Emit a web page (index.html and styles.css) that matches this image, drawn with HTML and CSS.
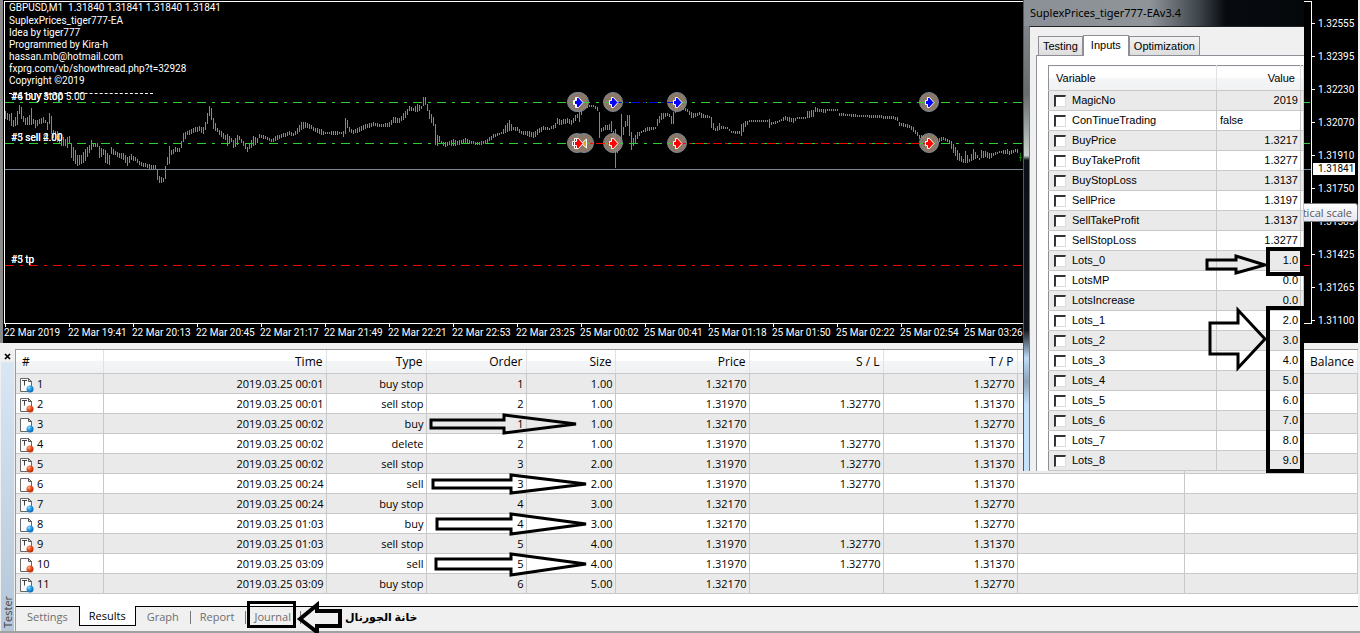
FILE: index.html
```html
<!DOCTYPE html>
<html lang="en">
<head>
    <meta charset="UTF-8">
    <meta name="viewport" content="width=device-width, initial-scale=1.0">
    <title>Strategy Tester - GBPUSD,M1</title>
    <link rel="stylesheet" href="styles.css">
</head>
<body>
    <svg class="defs" width="0" height="0" aria-hidden="true">
        <defs>
            <radialGradient id="ball-blue" cx="35%" cy="30%" r="75%">
                <stop offset="0" stop-color="#9adcff"/><stop offset=".5" stop-color="#1c97e8"/><stop offset="1" stop-color="#0b5fa8"/>
            </radialGradient>
            <radialGradient id="ball-red" cx="35%" cy="30%" r="75%">
                <stop offset="0" stop-color="#ffb08a"/><stop offset=".5" stop-color="#ea4a14"/><stop offset="1" stop-color="#a82a05"/>
            </radialGradient>
            <symbol id="doc" viewBox="0 0 15 16">
                <path d="M1.5 1.5h8l3 3v10h-11z" fill="#fdfdfd" stroke="#666"/>
                <path d="M9.5 1.5v3h3z" fill="#ddd" stroke="#555"/>
            </symbol>
            <symbol id="doc-t" viewBox="0 0 15 16">
                <use href="#doc"/>
                <path d="M3 3.5h5M5.500 3.500v5" fill="none" stroke="#444"/>
            </symbol>
            <symbol id="arrow" viewBox="0 0 10 11">
                <path d="M.5 3.500h2V.5h2l4.500 5l-4.500 5h-2v-3h-2z" fill="currentColor" stroke="#fff"/>
            </symbol>
        </defs>
    </svg>

    <div class="desktop">
        <!-- Chart -->
        <section class="chart">
            <div class="plot">
                <svg id="plot-svg" class="plot-svg" width="1306" height="322" viewBox="5 2 1306 322">
                    <g fill="#8b7867" stroke="#778899">
                        <circle cx="577" cy="102" r="9.500"/><circle cx="579" cy="102" r="9.500"/>
                        <circle cx="613" cy="102" r="9.500"/><circle cx="677" cy="102" r="9.500"/><circle cx="929" cy="102" r="9.500"/>
                        <circle cx="577" cy="143" r="9.500"/><circle cx="584" cy="143" r="9.500"/>
                        <circle cx="613" cy="143" r="9.500"/><circle cx="677" cy="143" r="9.500"/><circle cx="929" cy="143" r="9.500"/>
                    </g>
                    <g shape-rendering="crispEdges">
                        <path d="M5 169.500H1311" stroke="#778899"/>
                        <path d="M5 102.500H1311M5 143.500H1311" stroke="#32cd32" stroke-dasharray="9 6 3 6"/>
                        <path d="M5 265.500H1311" stroke="#f00" stroke-dasharray="9 6 3 6"/>
                        <path d="M613 102.500H677" stroke="#00f" stroke-dasharray="9 3 3 3"/>
                        <path d="M578 143.500H613M677 143.500H929" stroke="#f00" stroke-dasharray="9 3 3 3"/>
                        <path id="bars" stroke="#00e600" fill="none"/>
                        <path d="M1020.500 153v8M1019 157.500h3" stroke="#008000"/>
                    </g>
                    <g class="blue">
                        <use href="#arrow" x="573" y="97" width="10" height="11"/>
                        <use href="#arrow" x="574" y="97" width="10" height="11"/>
                        <use href="#arrow" x="609" y="97" width="10" height="11"/>
                        <use href="#arrow" x="673" y="97" width="10" height="11"/>
                        <use href="#arrow" x="925" y="97" width="10" height="11"/>
                    </g>
                    <g class="red">
                        <path d="M586.500 139v9l-5-4.500z" fill="#daa520" stroke="#fff"/>
                        <use href="#arrow" x="572" y="138" width="10" height="11"/>
                        <use href="#arrow" x="574" y="138" width="10" height="11"/>
                        <use href="#arrow" x="609" y="138" width="10" height="11"/>
                        <use href="#arrow" x="673" y="138" width="10" height="11"/>
                        <use href="#arrow" x="925" y="138" width="10" height="11"/>
                    </g>
                    <g class="order-text">
                        <text x="11" y="100">#6 buy stop 5.00</text>
                        <text x="11" y="100">#4 buy 3.00</text>
                        <text x="11" y="141">#3 sell 2.00</text>
                        <text x="11" y="141">#5 sell 4.00</text>
                        <text x="11" y="263">#3 tp</text>
                        <text x="11" y="263">#5 tp</text>
                    </g>
                </svg>
                <div class="comment">
                    <p class="symbol">GBPUSD,M1&nbsp; 1.31840 1.31841 1.31840 1.31841</p>
                    <p>SuplexPrices_tiger777-EA</p>
                    <p>Idea by tiger777</p>
                    <p>Programmed by Kira-h</p>
                    <p>hassan.mb@hotmail.com</p>
                    <p>fxprg.com/vb/showthread.php?t=32928</p>
                    <p>Copyright ©2019</p>
                    <p class="rule"></p>
                </div>
            </div>
            <div class="price-axis">
                <span>1.32555</span><span>1.32395</span><span>1.32230</span><span>1.32070</span><span>1.31910</span>
                <span>1.31750</span><span>1.31585</span><span>1.31425</span><span>1.31265</span><span>1.31100</span>
                <b class="last-price">1.31841</b>
                <div class="tooltip">tical scale</div>
            </div>
            <div class="time-axis">
                <span>22 Mar 2019</span><span>22 Mar 19:41</span><span>22 Mar 20:13</span><span>22 Mar 20:45</span>
                <span>22 Mar 21:17</span><span>22 Mar 21:49</span><span>22 Mar 22:21</span><span>22 Mar 22:53</span>
                <span>22 Mar 23:25</span><span>25 Mar 00:02</span><span>25 Mar 00:41</span><span>25 Mar 01:18</span>
                <span>25 Mar 01:50</span><span>25 Mar 02:22</span><span>25 Mar 02:54</span><span>25 Mar 03:26</span>
            </div>
        </section>

        <!-- Tester -->
        <section class="tester">
            <div class="side">
                <button class="close" aria-label="Close">
                    <svg width="7" height="7" viewBox="0 0 7 7"><path d="M1 1l5 5M6 1l-5 5" stroke="#000" stroke-width="1.700"/></svg>
                </button>
                <div class="side-title">Tester</div>
            </div>
            <div class="tester-main">
                <div class="results">
                    <table class="orders">
                        <colgroup>
                            <col class="c-num"><col class="c-time"><col class="c-type"><col class="c-type"><col class="c-size">
                            <col class="c-price"><col class="c-price"><col class="c-price"><col class="c-profit"><col>
                        </colgroup>
                        <thead>
                            <tr><th class="left">#</th><th>Time</th><th>Type</th><th>Order</th><th>Size</th><th>Price</th><th>S / L</th><th>T / P</th><th></th><th>Balance</th></tr>
                        </thead>
                        <tbody id="orders"></tbody>
                    </table>
                </div>
                <nav class="tabs">
                    <button>Settings</button>
                    <button class="active">Results</button>
                    <button>Graph</button>
                    <button class="sep">Report</button>
                    <button class="sep journal">Journal</button>
                    <span class="note" lang="ar" dir="rtl">خانة الجورنال</span>
                </nav>
            </div>
        </section>

        <!-- Expert properties -->
        <section class="dialog">
            <h1 class="dialog-title">SuplexPrices_tiger777-EAv3.4</h1>
            <div class="dialog-body">
                <div class="dialog-tabs">
                    <button>Testing</button>
                    <button class="active">Inputs</button>
                    <button>Optimization</button>
                </div>
                <div class="pane">
                    <table class="inputs">
                        <colgroup><col class="c-var"><col class="c-value"><col></colgroup>
                        <thead>
                            <tr><th>Variable</th><th class="num">Value</th><th></th></tr>
                        </thead>
                        <tbody id="inputs"></tbody>
                    </table>
                </div>
            </div>
        </section>

        <!-- Hand-drawn marks -->
        <svg class="marks" width="1360" height="633" viewBox="0 0 1360 633" fill="none" stroke="#000">
            <g stroke-width="3">
                <path d="M431 420H504V415L576 424L504 433V428H431Z"/>
                <path d="M433 480H511V475L586 484L511 493V488H433Z"/>
                <path d="M437 519H511V514L586 524L511 534V529H437Z"/>
                <path d="M436 559H511V554L586 564L511 575V569H436Z"/>
                <path d="M1207 260H1236V256L1265 265L1236 273V269H1207Z"/>
                <path d="M1210 323H1238V310L1265 339L1238 368V354H1210Z"/>
            </g>
            <g stroke-width="4">
                <path d="M1268 249H1302V274H1268Z M1268 308H1302V471H1268Z"/>
                <path d="M300 619L317 605V611H340V626H317V632Z" fill="#f0f0f0"/>
            </g>
            <path d="M248.500 602.500H294.500V626.500H248.500Z" stroke-width="3"/>
        </svg>
    </div>

    <script src="app.js"></script>
</body>
</html>
```

FILE: styles.css
```css
* {
    margin: 0;
    padding: 0;
    box-sizing: border-box;
}

body {
    font-family: "Open Sans", "Noto Sans", sans-serif;
    font-size: 12px;
    color: #000;
    background: #f0f0f0;
}

button {
    font: inherit;
    color: inherit;
    background: none;
    border: none;
}

table {
    border-collapse: collapse;
    table-layout: fixed;
    width: 100%;
}

.defs {
    position: absolute;
}

.desktop {
    position: relative;
    min-height: 100vh;
    overflow: hidden;
    display: flex;
    flex-direction: column;
}

/* chart */
.chart {
    display: grid;
    grid-template-columns: minmax(0, 1fr) 46px;
    background: #000;
    color: #fff;
    font-family: Roboto, "Noto Sans", sans-serif;
    font-size: 10px;
    border-left: 3px solid #8a8a8a;
    border-right: 2px solid #f0f0f0;
    padding: 1px 0 0 1px;
    margin-bottom: 6px;
}

.plot {
    position: relative;
    border: 1px solid #fff;
    height: 323px;
    overflow: hidden;
}

.plot-svg {
    display: block;
}

.blue {
    color: #00f;
}

.red {
    color: #f00;
}

.order-text {
    fill: #fff;
}

.comment {
    position: absolute;
    left: 4px;
    top: 0;
    line-height: 12px;
}

.comment .symbol {
    margin-bottom: 1px;
}

.comment .rule {
    border-bottom: 1px dashed #fff;
    width: 144px;
    height: 7px;
}

.price-axis {
    position: relative;
    display: flex;
    flex-direction: column;
    padding-top: 6px;
    line-height: 33px;
    height: 323px;
}

.price-axis span {
    display: flex;
    align-items: center;
    gap: 3px;
    height: 33px;
    flex-shrink: 0;
}

.price-axis span::before {
    content: "";
    width: 3px;
    height: 1px;
    background: #fff;
}

.last-price {
    position: absolute;
    left: 1px;
    top: 162px;
    width: 42px;
    padding-left: 5px;
    line-height: 12px;
    font-weight: normal;
    background: #fff;
    color: #000;
}

.tooltip {
    position: absolute;
    right: 0;
    top: 202px;
    width: 54px;
    height: 19px;
    padding-right: 5px;
    font-family: "Open Sans", sans-serif;
    font-size: 11px;
    line-height: 17px;
    text-align: right;
    direction: rtl;
    white-space: nowrap;
    overflow: hidden;
    color: #575757;
    background: linear-gradient(#fff, #e4e5f0);
    border: 1px solid #767676;
    border-left: none;
    border-radius: 0 3px 3px 0;
}

.time-axis {
    grid-column: 1 / -1;
    display: flex;
    height: 19px;
    overflow: hidden;
}

.time-axis span {
    width: 64px;
    flex-shrink: 0;
    line-height: 12px;
    white-space: nowrap;
}

.time-axis span::before {
    content: "";
    display: block;
    width: 1px;
    height: 3px;
    margin-left: 1px;
    background: #fff;
}

/* tester */
.tester {
    flex: 1;
    display: flex;
    border-bottom: 2px solid #a0a0a0;
}

.side {
    width: 15px;
    display: flex;
    flex-direction: column;
    align-items: center;
    padding-right: 1px;
}

.close {
    height: 13px;
    line-height: 8px;
}

.side-title {
    flex: 1;
    width: 13px;
    writing-mode: vertical-rl;
    transform: rotate(180deg);
    padding-top: 3px;
    font-size: 11px;
    line-height: 13px;
    color: #444;
    background: linear-gradient(#b4c6d8, #d9e7f5);
}

.tester-main {
    flex: 1;
    min-width: 0;
    display: flex;
    flex-direction: column;
    margin-right: 2px;
    border-left: 1px solid #999;
}

.results {
    flex: 1;
    background: #fff;
    border-top: 1px solid #999;
    border-bottom: 1px solid #000;
}

.orders {
    font-size: 12px;
}

.orders th,
.orders td {
    padding: 0 2px 0 0;
    text-align: right;
    font-weight: normal;
    white-space: nowrap;
    line-height: 19px;
}

.orders th {
    height: 23px;
    padding-right: 3px;
    background: linear-gradient(#fff 45%, #f4f5f6 50%, #f0f1f3);
    border-right: 1px solid #e0e1e3;
    border-bottom: 1px solid #c8c8c8;
}

.orders th.left,
.orders td.left {
    text-align: left;
}

.orders th.left {
    padding-left: 6px;
}

.orders td {
    height: 20px;
    font-size: 11px;
    border-right: 1px solid #c8c8c8;
    border-bottom: 1px solid #c8c8c8;
}

.orders tbody tr:nth-child(odd),
.inputs tbody tr:nth-child(odd) {
    background: #eaeaea;
}

.orders .icon {
    width: 15px;
    height: 16px;
    margin: 0 3px;
    vertical-align: middle;
}

.c-num { width: 87px; }
.c-time { width: 223px; }
.c-type { width: 100px; }
.c-size { width: 89px; }
.c-price { width: 134px; }
.c-profit { width: 167px; }

.tabs {
    display: flex;
    align-items: flex-start;
    height: 24px;
    color: #6e6e6e;
}

.tabs button {
    height: 19px;
    padding: 0 11px;
    font-size: 11px;
    line-height: 19px;
}

.tabs .active {
    color: #000;
    height: 20px;
    padding: 0 9px;
    background: #fff;
    border: solid #000;
    border-width: 0 1px 1px;
    margin-top: -1px;
}

.tabs .sep {
    background: linear-gradient(#777, #777) no-repeat 0 4px / 1px 13px;
    padding: 0 10px;
}

.tabs .journal {
    background: linear-gradient(#777, #777) no-repeat 0 4px / 1px 13px, linear-gradient(#777, #777) no-repeat 100% 4px / 1px 13px;
}

.note {
    margin-left: 44px;
    line-height: 20px;
    font-family: "Liberation Serif", "DejaVu Sans", serif;
    font-size: 11px;
    font-weight: bold;
    color: #000;
}

/* dialog */
.dialog {
    position: absolute;
    top: 0;
    right: 56px;
    width: 281px;
    padding-left: 5px;
    overflow: hidden;
    font-family: "Liberation Sans", Arial, sans-serif;
    font-size: 11px;
    background: linear-gradient(#8a8f93, #686c6f 20%, #c7d3cd 33%, #0b0f14 34%, #10161c 70%, #bcdcf8 76%, #8ea4b8 81%, #c5e2fd 86%);
    border-left: 1px solid #555;
}

.dialog-title {
    margin-left: -5px;
    height: 26px;
    padding-left: 6px;
    font-family: "Noto Sans", "Open Sans", sans-serif;
    font-size: 11px;
    font-weight: normal;
    line-height: 26px;
    background: linear-gradient(90deg, #8b9096, #8f9499 45%, #40474d 62%, #070b10 72%, #05080b);
}

.dialog-body {
    padding: 8px 0 0 6px;
    background: #f0f0f0;
    border-top: 1px solid #222;
    border-left: 1px solid #777;
}

.dialog-tabs {
    display: flex;
    align-items: flex-end;
    padding-left: 2px;
}

.dialog-tabs button {
    height: 19px;
    padding: 0 4px;
    background: linear-gradient(#f3f3f3, #ddd);
    border: 1px solid #8e8f96;
    border-bottom: none;
}

.dialog-tabs .active {
    height: 21px;
    margin-bottom: -1px;
    padding: 0 7px 2px;
    background: #fff;
    z-index: 1;
}

.pane {
    padding: 9px 0 0 11px;
    background: #fff;
    border: 1px solid #8e8f96;
    border-width: 1px 0 0 1px;
}

.inputs {
    border: 1px solid #8e8f96;
    border-right: none;
    border-bottom: none;
}

.inputs th {
    height: 25px;
    padding: 0 7px;
    font-weight: normal;
    text-align: left;
    background: linear-gradient(#fff 45%, #f4f5f6 50%, #f0f1f3);
    border-right: 1px solid #e0e1e3;
    border-bottom: 1px solid #c8c8c8;
}

.inputs td {
    height: 20px;
    padding: 0 3px;
    line-height: 19px;
    white-space: nowrap;
    border-right: 1px solid #c8c8c8;
    border-bottom: 1px solid #c8c8c8;
}

.inputs .num {
    text-align: right;
    padding-right: 2px;
}

.inputs th.num {
    padding-right: 5px;
}

.inputs label {
    display: flex;
    align-items: center;
    gap: 6px;
    padding-left: 2px;
}

.inputs input {
    appearance: none;
    width: 12px;
    height: 12px;
    background: #fff;
    border: 2px solid #333;
    border-width: 2px 1px 1px 2px;
    border-color: #333 #ddd #ddd #333;
}

.c-var { width: 168px; }
.c-value { width: 84px; }

.marks {
    position: absolute;
    top: 0;
    left: 0;
    pointer-events: none;
}
```

FILE: app.js
```javascript
// x, high, low for the M1 bars; the bars between two entries are interpolated
const PRICE_BARS = [
    [5,111,119],[9,114,121],[11,113,126],[13,120,127],[15,117,126],[17,111,125],[19,105,114],[21,107,119],[23,116,122],[25,118,125],
    [29,115,125],[31,108,125],[33,119,124],[35,120,128],[39,119,124],[43,117,123],[45,120,123],[47,122,130],[49,113,124],[51,116,134],
    [53,130,138],[57,131,142],[59,134,144],[61,135,146],[65,139,146],[67,137,148],[69,136,144],[71,143,158],[75,150,164],[77,155,166],
    [81,155,164],[85,149,161],[89,145,153],[91,140,150],[93,143,147],[97,143,147],[99,146,158],[103,149,155],[105,150,163],[109,155,165],
    [111,147,154],[115,151,155],[119,153,158],[123,153,160],[127,157,166],[131,154,160],[135,157,161],[139,161,165],[147,164,168],
    [155,165,170],[157,170,180],[159,176,183],[163,178,182],[165,166,179],[167,157,165],[169,146,164],[171,150,155],[175,147,152],
    [179,148,152],[181,141,148],[183,133,142],[187,131,135],[191,129,134],[195,127,132],[199,126,131],[203,127,134],[205,122,130],
    [207,113,124],[209,106,116],[211,108,120],[213,118,129],[217,128,132],[221,131,137],[225,135,140],[227,134,146],[231,138,142],
    [233,140,148],[237,135,145],[239,136,140],[243,141,146],[247,147,152],[249,144,149],[253,136,146],[257,138,143],[259,134,138],
    [265,136,139],[271,139,142],[275,136,141],[281,134,138],[289,131,135],[293,133,136],[297,128,134],[301,122,130],[305,122,128],
    [311,125,129],[315,128,132],[321,129,135],[325,132,134],[335,131,135],[341,132,134],[343,131,137],[345,118,134],[347,120,128],
    [349,127,132],[353,130,134],[359,127,132],[365,124,129],[373,122,126],[381,124,127],[389,122,127],[393,117,123],[399,118,123],
    [405,111,118],[409,106,111],[413,108,111],[417,104,112],[421,106,109],[423,97,106],[425,97,105],[427,104,111],[429,110,119],
    [433,117,126],[435,124,145],[437,135,146],[439,136,142],[441,141,144],[445,142,147],[449,141,145],[453,139,146],[457,141,145],
    [465,138,143],[471,141,144],[479,142,145],[487,139,143],[493,134,138],[501,132,134],[505,125,133],[509,120,131],[513,127,130],
    [517,127,131],[521,131,134],[527,131,136],[533,132,138],[537,129,135],[543,126,130],[549,128,130],[555,123,128],[557,118,124],
    [561,120,125],[567,118,123],[571,120,125],[575,115,121],[577,114,118],[579,110,122],[583,106,108],[593,105,107],[597,107,111],
    [599,112,138],[601,128,132],[605,125,130],[609,124,130],[611,121,132],[613,131,145],[615,129,168],[617,139,153],[619,137,147],
    [621,114,140],[623,127,135],[625,121,127],[627,115,126],[629,115,136],[631,132,150],[633,138,146],[637,132,139],[641,131,133],
    [647,127,131],[655,127,129],[657,119,126],[661,113,120],[667,113,116],[669,114,117],[671,116,124],[673,112,124],[675,107,113],
    [681,104,107],[683,106,110],[687,109,112],[691,112,118],[695,113,117],[699,112,115],[701,113,118],[709,116,118],[711,117,128],
    [715,128,131],[719,123,130],[721,126,129],[727,127,129],[731,131,133],[739,131,134],[741,124,136],[745,121,127],[749,120,122],
    [767,120,122],[769,119,128],[771,122,125],[779,120,122],[785,116,120],[793,118,123],[797,117,119],[805,117,119],[807,111,118],
    [813,110,117],[815,107,112],[819,109,112],[825,109,113],[827,109,111],[837,109,111],[839,113,116],[863,115,117],[873,115,118],
    [893,116,119],[897,117,121],[899,122,126],[909,125,128],[913,127,132],[917,132,136],[919,135,139],[927,136,138],[931,137,140],
    [933,141,143],[937,138,143],[943,137,140],[949,140,143],[951,141,149],[957,150,160],[963,159,163],[965,151,163],[969,159,162],
    [973,149,160],[977,155,158],[979,158,160],[981,150,158],[985,151,157],[989,153,159],[993,153,156],[999,151,153],[1007,149,154],
    [1009,151,155],[1015,149,152],[1017,149,153]
];

// time, type, order, size, price, S/L, T/P
const ORDERS = [
    ['00:01', 'buy stop', 1, '1.00', '1.32170', '', '1.32770'],
    ['00:01', 'sell stop', 2, '1.00', '1.31970', '1.32770', '1.31370'],
    ['00:02', 'buy', 1, '1.00', '1.32170', '', '1.32770'],
    ['00:02', 'delete', 2, '1.00', '1.31970', '1.32770', '1.31370'],
    ['00:02', 'sell stop', 3, '2.00', '1.31970', '1.32770', '1.31370'],
    ['00:24', 'sell', 3, '2.00', '1.31970', '1.32770', '1.31370'],
    ['00:24', 'buy stop', 4, '3.00', '1.32170', '', '1.32770'],
    ['01:03', 'buy', 4, '3.00', '1.32170', '', '1.32770'],
    ['01:03', 'sell stop', 5, '4.00', '1.31970', '1.32770', '1.31370'],
    ['03:09', 'sell', 5, '4.00', '1.31970', '1.32770', '1.31370'],
    ['03:09', 'buy stop', 6, '5.00', '1.32170', '', '1.32770']
];

const INPUTS = [
    ['MagicNo', '2019'], ['ConTinueTrading', 'false'], ['BuyPrice', '1.3217'], ['BuyTakeProfit', '1.3277'],
    ['BuyStopLoss', '1.3137'], ['SellPrice', '1.3197'], ['SellTakeProfit', '1.3137'], ['SellStopLoss', '1.3277'],
    ['Lots_0', '1.0'], ['LotsMP', '0.0'], ['LotsIncrease', '0.0'], ['Lots_1', '2.0'], ['Lots_2', '3.0'],
    ['Lots_3', '4.0'], ['Lots_4', '5.0'], ['Lots_5', '6.0'], ['Lots_6', '7.0'], ['Lots_7', '8.0'], ['Lots_8', '9.0']
];

function drawBars() {
    let d = '';
    for (let i = 0; i < PRICE_BARS.length; i++) {
        const [x, hi, lo] = PRICE_BARS[i];
        const next = PRICE_BARS[i + 1] || [x + 2, hi, lo];
        for (let px = x; px < next[0]; px += 2) {
            const t = (px - x) / (next[0] - x);
            const top = Math.round(hi + (next[1] - hi) * t);
            const bottom = Math.round(lo + (next[2] - lo) * t);
            d += `M${px + 0.5} ${top}V${bottom}`;
        }
    }
    document.getElementById('bars').setAttribute('d', d);
}

function orderIcon(type) {
    const doc = type === 'buy' || type === 'sell' ? 'doc' : 'doc-t';
    const ball = type.startsWith('buy') ? 'ball-blue' : 'ball-red';
    return `<svg class="icon" viewBox="0 0 15 16"><use href="#${doc}"/><circle cx="11" cy="12" r="3.5" fill="url(#${ball})"/></svg>`;
}

function fillOrders() {
    document.getElementById('orders').innerHTML = ORDERS.map(([time, type, ...rest], i) => `
        <tr>
            <td class="left">${orderIcon(type)}${i + 1}</td>
            <td>2019.03.25 ${time}</td>
            <td>${type}</td>
            ${rest.map(v => `<td>${v}</td>`).join('')}
            <td></td><td></td>
        </tr>`).join('');
}

function fillInputs() {
    document.getElementById('inputs').innerHTML = INPUTS.map(([name, value]) => `
        <tr>
            <td><label><input type="checkbox">${name}</label></td>
            <td class="${value === 'false' ? '' : 'num'}">${value}</td>
            <td></td>
        </tr>`).join('');
}

drawBars();
fillOrders();
fillInputs();
```
